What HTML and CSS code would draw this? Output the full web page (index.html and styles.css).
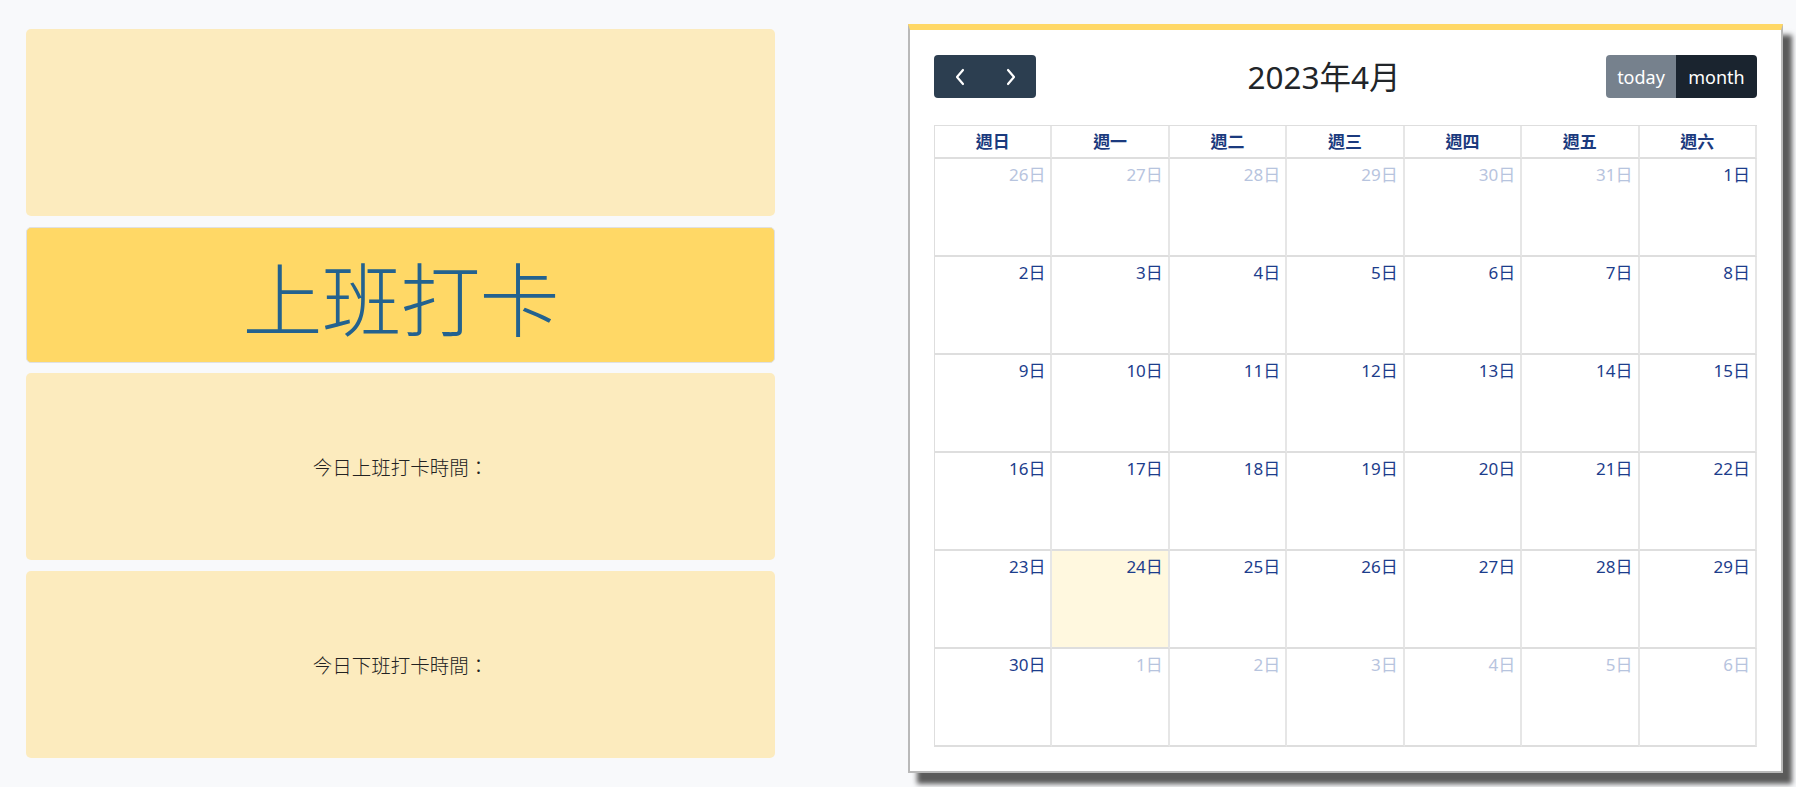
FILE: index.html
```html
<!DOCTYPE html>
<html lang="zh-Hant">
<head>
<meta charset="utf-8">
<title>打卡</title>
<link rel="stylesheet" href="styles.css">
</head>
<body>
<div class="page">
  <div class="left">
    <div class="card card-tall"></div>
    <div class="card card-punch"><span class="punch-text">上班打卡</span></div>
    <div class="card card-tall"><span class="info">今日上班打卡時間：</span></div>
    <div class="card card-tall"><span class="info">今日下班打卡時間：</span></div>
  </div>
  <div class="calendar">
    <div class="toolbar">
      <div class="btn-group">
        <button class="btn btn-nav" aria-label="prev">
          <svg width="12" height="18" viewBox="0 0 12 18"><path d="M9 2 L3 9 L9 16" fill="none" stroke="#fff" stroke-width="2.2" stroke-linecap="round" stroke-linejoin="round"/></svg>
        </button>
        <button class="btn btn-nav" aria-label="next">
          <svg width="12" height="18" viewBox="0 0 12 18"><path d="M3 2 L9 9 L3 16" fill="none" stroke="#fff" stroke-width="2.2" stroke-linecap="round" stroke-linejoin="round"/></svg>
        </button>
      </div>
      <h2 class="title">2023年4月</h2>
      <div class="btn-group">
        <button class="btn btn-today">today</button>
        <button class="btn btn-month">month</button>
      </div>
    </div>
    <div class="grid">
      <div class="head">週日</div><div class="head">週一</div><div class="head">週二</div><div class="head">週三</div><div class="head">週四</div><div class="head">週五</div><div class="head">週六</div>

      <div class="day other">26日</div><div class="day other">27日</div><div class="day other">28日</div><div class="day other">29日</div><div class="day other">30日</div><div class="day other">31日</div><div class="day">1日</div>

      <div class="day">2日</div><div class="day">3日</div><div class="day">4日</div><div class="day">5日</div><div class="day">6日</div><div class="day">7日</div><div class="day">8日</div>

      <div class="day">9日</div><div class="day">10日</div><div class="day">11日</div><div class="day">12日</div><div class="day">13日</div><div class="day">14日</div><div class="day">15日</div>

      <div class="day">16日</div><div class="day">17日</div><div class="day">18日</div><div class="day">19日</div><div class="day">20日</div><div class="day">21日</div><div class="day">22日</div>

      <div class="day">23日</div><div class="day today">24日</div><div class="day">25日</div><div class="day">26日</div><div class="day">27日</div><div class="day">28日</div><div class="day">29日</div>

      <div class="day">30日</div><div class="day other">1日</div><div class="day other">2日</div><div class="day other">3日</div><div class="day other">4日</div><div class="day other">5日</div><div class="day other">6日</div>
    </div>
  </div>
</div>
</body>
</html>
```

FILE: styles.css
```css
* {
  box-sizing: border-box;
}

html, body {
  margin: 0;
  padding: 0;
}

body {
  background: #f8f9fb;
  font-family: "Noto Sans", "Noto Sans CJK TC", sans-serif;
  color: #212529;
  font-size: 18px;
  min-height: 787px;
}

.page {
  display: flex;
  align-items: flex-start;
  padding: 24px 13px 14px 26px;
}

.left {
  width: 749px;
  padding-top: 5px;
  display: flex;
  flex-direction: column;
  gap: 10.5px;
}

.card {
  border-radius: 5px;
  background: #fcebbe;
  display: flex;
  align-items: center;
  justify-content: center;
}

.card-tall {
  height: 187px;
}

.card-punch {
  height: 136px;
  background: #ffd866;
  border: 1px solid #dfe0e2;
}

.punch-text {
  font-family: "Noto Sans CJK TC", sans-serif;
  font-size: 80px;
  font-weight: 300;
  color: #23628f;
  line-height: 1;
  letter-spacing: -1px;
}

.info {
  font-family: "Noto Sans CJK TC", sans-serif;
  font-size: 19.5px;
  font-weight: 300;
  color: #222;
}

.calendar {
  margin-left: 133px;
  width: 875px;
  background: #fff;
  border: 2px solid #b9b9b9;
  border-top: 6px solid #ffd866;
  padding: 25px 24px 24px 24px;
  box-shadow: 9px 11px 5px #5a5a5a;
}

.toolbar {
  display: flex;
  align-items: center;
  justify-content: space-between;
  height: 43px;
  margin-bottom: 27px;
}

.title {
  margin: 0;
  font-size: 31.5px;
  font-weight: 400;
  color: #212529;
  line-height: 1;
  padding-left: 6px;
}

.btn-group {
  display: flex;
  border-radius: 4px;
  overflow: hidden;
}

.btn {
  border: 0;
  margin: 0;
  height: 43px;
  font-family: "Noto Sans", sans-serif;
  font-size: 18px;
  color: #fff;
  display: flex;
  align-items: center;
  justify-content: center;
  padding: 0;
}

.btn-nav {
  width: 51px;
  background: #2c3e50;
}

.btn-today {
  width: 70px;
  background: #76818d;
}

.btn-month {
  width: 81px;
  background: #1a242f;
}

.grid {
  display: grid;
  grid-template-columns: repeat(7, 1fr);
  grid-template-rows: 33px repeat(6, 98px);
  border-top: 1px solid #dedede;
  border-left: 1px solid #dedede;
  width: 823px;
}

.head, .day {
  border-right: 2px solid #e6e6e6;
  border-bottom: 2px solid #dedede;
}

.head {
  font-weight: 700;
  text-align: center;
  color: #1b3a7e;
  font-size: 17px;
  line-height: 30px;
  font-family: "Noto Sans CJK TC", sans-serif;
}

.day {
  text-align: right;
  padding: 3px 5px 0 0;
  font-size: 17px;
  line-height: 26px;
  color: #1c3d8c;
}

.day.other {
  color: #b7c4de;
}

.day.today {
  background: #fff8df;
}
```
